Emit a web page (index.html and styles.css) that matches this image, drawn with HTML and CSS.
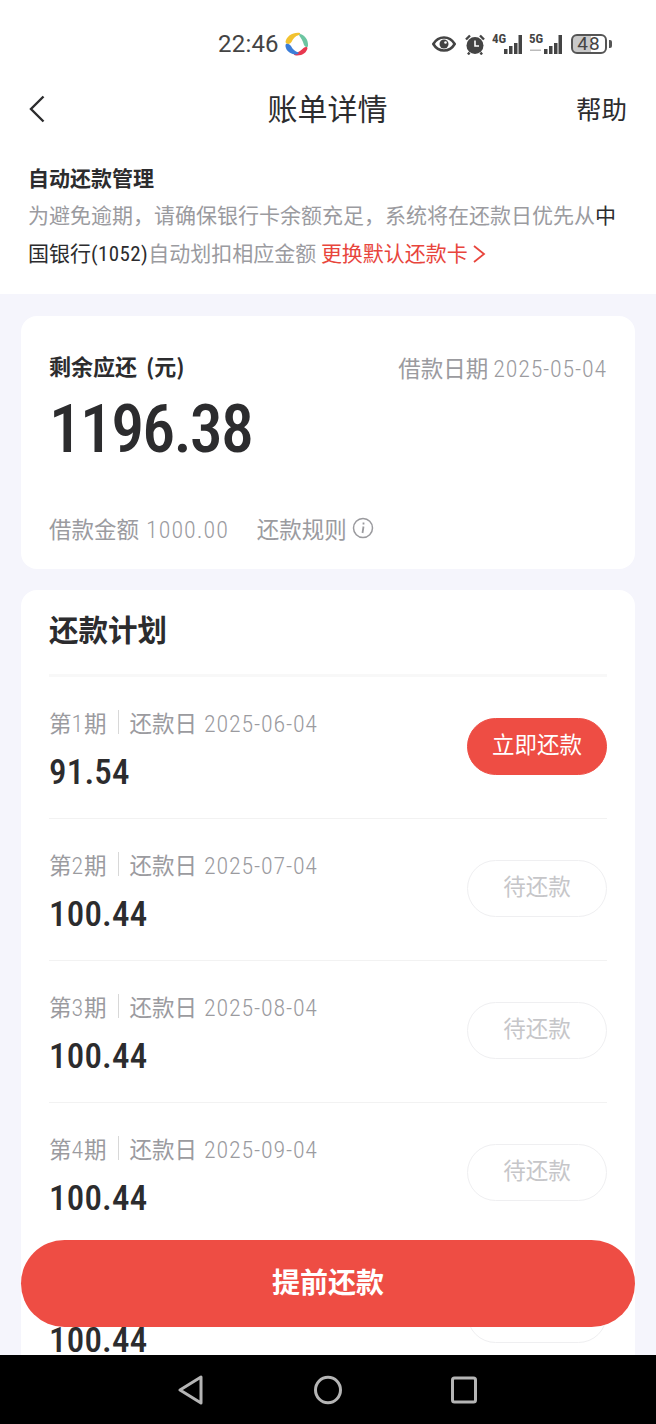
FILE: index.html
```html
<!DOCTYPE html>
<html lang="zh-CN">
<head>
<meta charset="UTF-8" />
<meta name="viewport" content="width=device-width, initial-scale=1" />
<title>账单详情</title>
<link rel="stylesheet" href="styles.css">
</head>
<body>
<div class="screen">
  <div class="content">
    <div class="top">
      <div class="status">
        <span class="time">22:46</span>
        <svg class="app-logo" width="24" height="24" viewBox="0 0 24 24">
          <path d="M0.500 10C1.500 4 8 0 15 1C15.500 1.500 15 2.500 14 3C10 4 8 7 6.500 10C5 12.500 1 12.500 0.500 10Z" fill="#f2c230"/>
          <path d="M15 2C20 3 23.500 8 23 14C22.500 16 20 15 19 13C18 9 16 6 14.500 4C14 3 14 2 15 2Z" fill="#6cc5a1"/>
          <path d="M22.500 16C22 20 18 23.500 12 23.500C9 23.500 8 22 10 21C14 20.500 16.500 18 18.500 16C20 14.500 22.500 14.500 22.500 16Z" fill="#e8384f"/>
          <path d="M1 12C3 11 5 12.500 6 14C7.500 17 10 19.500 13.500 20.500C14 21.500 13 22.500 10 22.500C4 22 0 17 0.500 13Z" fill="#3b7dd8"/>
        </svg>
        <div class="status-icons">
          <svg width="24" height="16" viewBox="0 0 24 16">
            <path d="M1.300 8C4 3.500 8 1.500 12 1.500S20 3.500 22.700 8C20 12.500 16 14.500 12 14.500S4 12.500 1.300 8Z" fill="none" stroke="#444" stroke-width="2.600"/>
            <circle cx="12" cy="8" r="4.500" fill="#444"/>
            <circle cx="13.500" cy="6.500" r="1.300" fill="#fff"/>
          </svg>
          <svg width="20" height="21" viewBox="0 0 20 21">
            <circle cx="10" cy="11.500" r="8.500" fill="#444"/>
            <path d="M1 5.500L5 1.500M19 5.500L15 1.500M4.500 18.500L3 20.500M15.500 18.500L17 20.500" stroke="#444" stroke-width="2.400" fill="none"/>
            <path d="M10 6.500V12H14" stroke="#fff" stroke-width="1.600" fill="none"/>
          </svg>
          <svg width="30" height="34" viewBox="0 -6 30 34">
            <text class="net" x="0" y="10">4G</text>
            <path d="M12 16h3.500v5H12zM17 13h3.500v8H17zM22 10h3.500v11H22zM26.500 2h3.500v19h-3.500z" fill="#444"/>
          </svg>
          <svg width="33" height="34" viewBox="0 -6 33 34">
            <text class="net" x="0" y="10">5G</text>
            <path d="M1 16.500h11v1.500H1z" fill="#bbb"/>
            <path d="M15 16h3.500v5H15zM20 13h3.500v8H20zM25 10h3.500v11H25zM29.500 2H33v19h-3.500z" fill="#444"/>
          </svg>
          <div class="battery">
            <span class="battery-box">48</span>
            <span class="battery-nub"></span>
          </div>
        </div>
      </div>
      <div class="nav">
        <svg class="back" width="18" height="28" viewBox="0 0 18 28">
          <path d="M15.500 1.500L3 14L15.500 26.500" fill="none" stroke="#2c2c2e" stroke-width="2.400"/>
        </svg>
        <h1>账单详情</h1>
        <span class="help">帮助</span>
      </div>
      <div class="notice">
        <h3>自动还款管理</h3>
        <p>为避免逾期，请确保银行卡余额充足，系统将在还款日优先从<span class="dark">中</span><br><span class="dark">国银行<span class="cond">(1052)</span></span>自动划扣相应金额 <span class="red">更换默认还款卡<svg class="chev" width="14" height="20" viewBox="0 0 14 20"><path d="M2 2L12 10L2 18" fill="none" stroke="#e8453c" stroke-width="1.800"/></svg></span></p>
      </div>
    </div>

    <div class="card summary">
      <div class="summary-head">
        <span class="summary-label">剩余应还 (元)</span>
        <span class="muted">借款日期 <span class="num">2025-05-04</span></span>
      </div>
      <div class="total">1196.38</div>
      <div class="summary-foot">
        <span class="muted">借款金额 <span class="num">1000.00</span></span>
        <span class="muted">还款规则</span>
        <svg width="22" height="22" viewBox="0 0 22 22">
          <circle cx="11" cy="11" r="9.500" fill="none" stroke="#9a9a9e" stroke-width="1.500"/>
          <path d="M11.500 5.500v2M11.500 9.500L10.500 16" stroke="#9a9a9e" stroke-width="1.800" fill="none"/>
        </svg>
      </div>
    </div>

    <div class="card plan">
      <h2>还款计划</h2>
      <div class="row">
        <div class="row-info">
          <div class="muted period"><span>第<span class="num">1</span>期</span><i></i><span>还款日 <span class="num">2025-06-04</span></span></div>
          <div class="amount">91.54</div>
        </div>
        <span class="pay-btn now">立即还款</span>
      </div>
      <div class="row">
        <div class="row-info">
          <div class="muted period"><span>第<span class="num">2</span>期</span><i></i><span>还款日 <span class="num">2025-07-04</span></span></div>
          <div class="amount">100.44</div>
        </div>
        <span class="pay-btn">待还款</span>
      </div>
      <div class="row">
        <div class="row-info">
          <div class="muted period"><span>第<span class="num">3</span>期</span><i></i><span>还款日 <span class="num">2025-08-04</span></span></div>
          <div class="amount">100.44</div>
        </div>
        <span class="pay-btn">待还款</span>
      </div>
      <div class="row">
        <div class="row-info">
          <div class="muted period"><span>第<span class="num">4</span>期</span><i></i><span>还款日 <span class="num">2025-09-04</span></span></div>
          <div class="amount">100.44</div>
        </div>
        <span class="pay-btn">待还款</span>
      </div>
      <!-- this row runs under the fixed button, only its amount shows -->
      <div class="row">
        <div class="row-info">
          <div class="period"></div>
          <div class="amount">100.44</div>
        </div>
        <span class="pay-btn"></span>
      </div>
    </div>

    <div class="prepay">提前还款</div>
  </div>

  <div class="sys-nav">
    <svg width="28" height="30" viewBox="0 0 28 30"><path d="M23 2V28L2 15Z" fill="none" stroke="#b5b5b5" stroke-width="3" stroke-linejoin="round"/></svg>
    <svg width="28" height="30" viewBox="0 0 28 30"><ellipse cx="14" cy="15" rx="12.500" ry="12.800" fill="none" stroke="#b5b5b5" stroke-width="3"/></svg>
    <svg width="28" height="30" viewBox="0 0 28 30"><rect x="2.500" y="3" width="23" height="24" rx="2" fill="none" stroke="#b5b5b5" stroke-width="3"/></svg>
  </div>
</div>
</body>
</html>
```
FILE: styles.css
```css
* { box-sizing: border-box; }
html, body { margin: 0; padding: 0; }
body { font-family: "Noto Sans CJK SC", "Noto Sans", sans-serif; color: #2c2c2e; background: #f5f5fc; }
h1, h2, h3, p { margin: 0; }

.screen { width: 656px; height: 1424px; display: flex; flex-direction: column; overflow: hidden; }
.content { position: relative; flex: 1; min-height: 0; overflow: hidden; }

.top { height: 294px; background: #fff; }

.status { height: 88px; display: flex; align-items: center; padding: 0 44px 0 218px; }
.time { font-family: Roboto, sans-serif; font-size: 24px; letter-spacing: 0.200px; color: #444; }
.app-logo { margin-left: 6px; }
.status-icons { margin-left: auto; display: flex; align-items: center; gap: 7px; }
.status-icons svg:first-child { margin-right: 2px; }
.net { font-family: Roboto, sans-serif; font-size: 13px; font-weight: 700; fill: #444; font-stretch: condensed; }
.battery { display: flex; align-items: center; gap: 2px; margin-left: 2px; }
.battery-box { width: 36px; height: 20px; border: 2px solid #555; border-radius: 6px; background: linear-gradient(90deg, #c9c9c9 55%, #fff 55%); font-family: Roboto, sans-serif; font-size: 19px; letter-spacing: 1px; line-height: 16px; text-align: center; color: #444; }
.battery-nub { width: 3px; height: 8px; background: #555; border-radius: 0 2px 2px 0; }

.nav { height: 42px; display: grid; grid-template-columns: 1fr auto 1fr; align-items: center; padding: 0 29px 0 28px; }
.nav h1 { font-size: 30px; font-weight: 400; line-height: 42px; margin-top: -4px; }
.help { font-size: 25.500px; line-height: 42px; text-align: right; margin-top: -3px; }

.notice { padding: 31px 28px 0; }
.notice h3 { font-size: 21px; font-weight: 700; line-height: 32px; }
.notice p { font-size: 21px; line-height: 38px; color: #9b9b9f; margin-top: 2px; }
.dark { color: #2c2c2e; }
.cond { font-family: Roboto, sans-serif; font-stretch: condensed; letter-spacing: 0.400px; }
.red { color: #e8453c; }
.chev { vertical-align: -3px; margin-left: 4px; }

.card { background: #fff; border-radius: 16px; margin: 0 21px; }

.summary { margin-top: 22px; height: 253px; padding: 32px 28px 0; }
.summary-head { display: flex; justify-content: space-between; align-items: center; height: 38px; }
.summary-label { font-size: 22px; font-weight: 700; margin-top: -5px; word-spacing: 4px; }
.muted { font-size: 22.500px; color: #9b9b9f; }
.num { font-family: Roboto, sans-serif; font-size: 24px; font-weight: 300; font-stretch: condensed; letter-spacing: 0.800px; }
.total { font-family: "Roboto Condensed", Roboto, sans-serif; font-size: 66px; font-weight: 500; font-stretch: condensed; letter-spacing: -1.900px; line-height: 80px; margin-top: 4px; }
.summary-foot { display: flex; align-items: center; gap: 28px; margin-top: 39px; height: 38px; }
.summary-foot .num { margin-left: 2px; letter-spacing: 1px; }
.summary-foot svg { margin-left: -23px; }

.plan { margin-top: 21px; padding: 0 28px 40px; }
.plan h2 { font-size: 29.500px; font-weight: 700; height: 87px; line-height: 76px; border-bottom: 3px solid #f8f8f8; }

.row { height: 142px; display: flex; align-items: center; justify-content: space-between; border-bottom: 1px solid #f2f2f2; }
.row-info { display: flex; flex-direction: column; gap: 18px; margin-bottom: 1px; }
.period { display: flex; align-items: center; height: 36px; }
.period i { width: 1px; height: 24px; background: #d8d8d8; margin: 0 11px; }
.period i + span .num { margin-left: 2px; }
.amount { font-family: "Roboto Condensed", Roboto, sans-serif; font-size: 35px; font-weight: 500; font-stretch: condensed; line-height: 30px; letter-spacing: 0.200px; margin-bottom: 3px; }

.pay-btn { width: 140px; height: 57px; border: 1px solid #efeff1; border-radius: 29px; margin-bottom: 3px; display: flex; align-items: center; justify-content: center; font-size: 22.500px; color: #c6c6c9; padding-bottom: 6px; }
.pay-btn.now { background: #ee4d44; border-color: #ee4d44; color: #fff; }

.prepay { position: absolute; left: 21px; right: 21px; top: 1240px; height: 87px; border-radius: 44px; background: #ee4d44; color: #fff; font-size: 28px; font-weight: 700; display: flex; align-items: center; justify-content: center; padding-bottom: 6px; }

.sys-nav { flex: none; height: 69px; background: #000; display: flex; align-items: center; justify-content: center; gap: 108px; }
```
